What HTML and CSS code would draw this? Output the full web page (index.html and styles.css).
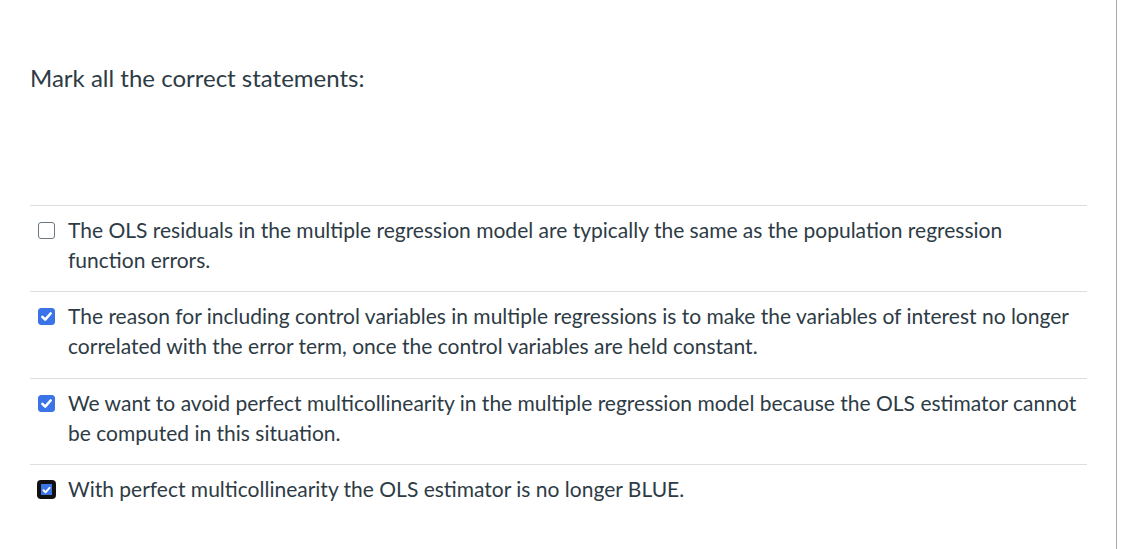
FILE: index.html
```html
<!DOCTYPE html>
<html>
<head>
<meta charset="utf-8">
<link rel="stylesheet" href="styles.css">
</head>
<body>
<div class="page">
  <div class="question">
    <p class="prompt">Mark all the correct statements:</p>
    <div class="answers">
      <label class="answer">
        <span class="box"></span>
        <span class="text">The OLS residuals in the multiple regression model are typically the same as the population regression function errors.</span>
      </label>
      <label class="answer">
        <span class="box checked"><svg viewBox="0 0 16 16"><path d="M3.6 8.4 L6.6 11.3 L12.4 4.8" /></svg></span>
        <span class="text">The reason for including control variables in multiple regressions is to make the variables of interest no longer correlated with the error term, once the control variables are held constant.</span>
      </label>
      <label class="answer">
        <span class="box checked"><svg viewBox="0 0 16 16"><path d="M3.6 8.4 L6.6 11.3 L12.4 4.8" /></svg></span>
        <span class="text">We want to avoid perfect multicollinearity in the multiple regression model because the OLS estimator cannot be computed in this situation.</span>
      </label>
      <label class="answer">
        <span class="box checked focused"><svg viewBox="0 0 16 16"><path d="M3.6 8.4 L6.6 11.3 L12.4 4.8" /></svg></span>
        <span class="text">With perfect multicollinearity the OLS estimator is no longer BLUE.</span>
      </label>
    </div>
  </div>
</div>
</body>
</html>
```

FILE: styles.css
```css
html, body {
  margin: 0;
  padding: 0;
  background: #ffffff;
}
body {
  font-family: Lato, "Noto Sans", sans-serif;
  color: #2d3b45;
}
.page {
  width: 1116px;
  height: 549px;
  border-right: 1px solid #a9a9a9;
  box-sizing: content-box;
}
.question {
  padding: 0 29px 0 30px;
}
.prompt {
  margin: 0;
  padding-top: 63px;
  font-size: 24px;
  line-height: 30px;
  height: 142px;
}
.answers {
  display: flex;
  flex-direction: column;
}
.answer {
  display: flex;
  align-items: flex-start;
  border-top: 1px solid #dcdfe2;
  padding: 9px 6px 16.4px 8px;
  font-size: 21px;
  line-height: 30px;
}
.box {
  flex: none;
  box-sizing: border-box;
  width: 17px;
  height: 17px;
  margin-top: 7px;
  margin-right: 13px;
  border: 1.5px solid #6b7780;
  border-radius: 3px;
  background: #fff;
  display: flex;
  align-items: center;
  justify-content: center;
}
.box.checked {
  background: #3b73e8;
  border-color: #3b73e8;
}
.box.focused {
  outline: 2px solid #111;
  outline-offset: -1px;
  border: 3px solid #111;
}
.box svg {
  width: 15px;
  height: 15px;
}
.box.focused svg {
  width: 12px;
  height: 12px;
}
.box svg path {
  fill: none;
  stroke: #fff;
  stroke-width: 2.8;
  stroke-linecap: round;
  stroke-linejoin: round;
}
.text {
  flex: 1;
}
```
